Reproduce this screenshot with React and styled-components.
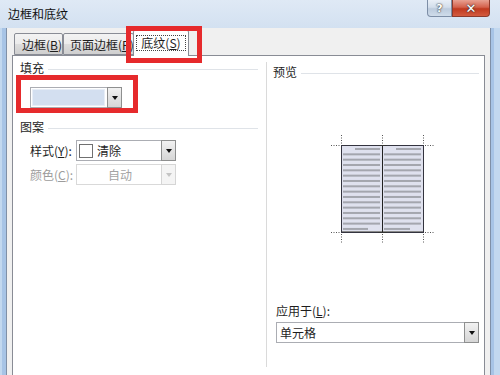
import React from "react";
import styled, { createGlobalStyle } from "styled-components";

const GlobalStyle = createGlobalStyle`
  html, body { margin: 0; padding: 0; }
  body {
    font-family: "Noto Sans CJK SC", "Noto Sans", "Liberation Sans", sans-serif;
    font-size: 12px;
    color: #1e1e1e;
  }
`;

const Root = styled.div`
  position: relative;
  width: 500px;
  height: 375px;
  overflow: hidden;
  background: #c6d9ef;
  display: flex;
  flex-direction: column;
`;

const TitleBar = styled.div`
  height: 28px;
  flex: none;
  display: flex;
  align-items: flex-start;
  background: linear-gradient(#dfe9f5, #d3e1f1);
  padding-right: 10px;
`;

const Title = styled.div`
  padding-left: 8px;
  line-height: 28px;
  font-size: 12px;
  color: #111;
`;

const Caption = styled.div`
  margin-left: auto;
  display: flex;
`;

const CapBtn = styled.div`
  width: ${(p) => p.w}px;
  height: 17px;
  box-sizing: border-box;
  border: 1px solid ${(p) => (p.red ? "#8c3a2c" : "#7d8ea6")};
  border-top: none;
  border-radius: ${(p) => (p.red ? "0 0 4px 0" : "0 0 0 4px")};
  background: ${(p) =>
    p.red
      ? "linear-gradient(#e8a192, #d4614c 45%, #c0391f 55%, #d35b3f)"
      : "linear-gradient(#e9eff7, #d3deeb 45%, #bccbdd 55%, #cfdcea)"};
  display: flex;
  align-items: center;
  justify-content: center;
  color: #fff;
  font-family: "DejaVu Sans", sans-serif;
  font-weight: bold;
  font-size: ${(p) => (p.red ? 13 : 11)}px;
  text-shadow: 0 0 2px #333, 0 0 1px #333;
`;

const Body = styled.div`
  flex: 1;
  display: flex;
  min-height: 0;
`;

const FrameLeft = styled.div`
  width: 7px;
  flex: none;
  background: linear-gradient(to right, #c2d8ef 0 2px, #a7c4e6 2px 6px, #7f90a7 6px 7px);
`;

const FrameRight = styled.div`
  width: 10px;
  flex: none;
  background: linear-gradient(to right, #7f90a7 0 1px, #a7c4e6 1px 4px, #c2d8ef 4px);
`;

const Content = styled.div`
  flex: 1;
  background: #f0f0f0;
  padding: 5px 5px 0 5px;
  display: flex;
  flex-direction: column;
  min-width: 0;
`;

const TabStrip = styled.div`
  display: flex;
  align-items: flex-end;
  height: 22px;
  padding-left: 2px;
  position: relative;
  z-index: 1;
`;

const Tab = styled.div`
  width: ${(p) => p.w}px;
  height: ${(p) => (p.active ? 26 : 22)}px;
  margin-left: ${(p) => p.ml || 0}px;
  margin-bottom: ${(p) => (p.active ? -1 : 0)}px;
  box-sizing: border-box;
  border: 1px solid #898c95;
  border-bottom: ${(p) => (p.active ? "none" : "1px solid #898c95")};
  border-radius: 2px 2px 0 0;
  background: ${(p) =>
    p.active ? "#fff" : "linear-gradient(#f3f3f3, #ebebeb 50%, #dddddd 51%, #cfcfcf)"};
  display: flex;
  align-items: center;
  justify-content: ${(p) => (p.active ? "center" : "flex-start")};
  padding-left: ${(p) => (p.active ? 0 : p.pl)}px;
  white-space: nowrap;
  position: relative;
  z-index: ${(p) => (p.active ? 2 : 1)};
`;

const Focus = styled.span`
  border: 1px dotted #444;
  padding: 0 4px;
  line-height: 14px;
  margin-top: -2px;
`;

const U = styled.span`
  text-decoration: underline;
  text-underline-offset: 1px;
`;

const Panel = styled.div`
  flex: 1;
  background: #fff;
  border: 1px solid #898c95;
  border-bottom: none;
  display: flex;
  padding-top: 4px;
`;

const LeftSection = styled.div`
  width: 245px;
  padding-left: 7px;
  display: flex;
  flex-direction: column;
  flex: none;
`;

const Head = styled.div`
  height: 16px;
  display: flex;
  align-items: center;
  gap: 4px;
  margin-top: ${(p) => p.mt || 0}px;
  margin-right: ${(p) => p.mr || 0}px;
  line-height: 16px;
  &::after {
    content: "";
    flex: 1;
    height: 1px;
    background: #dfe3e8;
    margin-top: 2px;
  }
`;

const Combo = styled.div`
  width: ${(p) => p.w}px;
  height: 21px;
  box-sizing: border-box;
  border: 1px solid ${(p) => (p.disabled ? "#d9d9d9" : "#abadb3")};
  background: #fff;
  display: flex;
  align-items: stretch;
  margin-top: ${(p) => p.mt || 0}px;
  margin-left: ${(p) => p.ml || 0}px;
  flex: none;
`;

const ComboText = styled.div`
  flex: 1;
  display: flex;
  align-items: center;
  gap: 4px;
  padding-left: ${(p) => p.pl ?? 2}px;
  justify-content: ${(p) => (p.center ? "center" : "flex-start")};
  color: ${(p) => (p.disabled ? "#a3a3a3" : "#1e1e1e")};
`;

const Swatch = styled.div`
  flex: 1;
  margin: 1px 2px 1px 1px;
  background: #d3dff0;
  border: 1px solid #e8eef7;
`;

const Square = styled.div`
  width: 14px;
  height: 14px;
  box-sizing: border-box;
  border: 1px solid #707070;
  background: #fff;
`;

const DropBtn = styled.div`
  width: 15px;
  flex: none;
  box-sizing: border-box;
  border: 1px solid ${(p) => (p.disabled ? "#d5d5d5" : "#8e8f8f")};
  margin: -1px -1px -1px 0;
  background: ${(p) => (p.disabled ? "#f4f4f4" : "linear-gradient(#f2f2f2, #e3e3e3 50%, #d6d6d6)")};
  display: flex;
  align-items: center;
  justify-content: center;
  &::after {
    content: "";
    border-left: 3.5px solid transparent;
    border-right: 3.5px solid transparent;
    border-top: 4px solid ${(p) => (p.disabled ? "#c4c4c4" : "#111")};
    margin-top: 1px;
  }
`;

const Row = styled.div`
  display: flex;
  align-items: center;
  margin-top: ${(p) => p.mt}px;
  padding-left: 10px;
`;

const Label = styled.div`
  width: 46px;
  flex: none;
  color: ${(p) => (p.disabled ? "#9c9c9c" : "#1e1e1e")};
`;

const RightSection = styled.div`
  flex: none;
  width: 212px;
  margin-left: 1px;
  height: 305px;
  margin-top: 2px;
  border-left: 1px solid #dadada;
  padding-left: 6px;
  display: flex;
  flex-direction: column;
`;

const PreviewWrap = styled.div`
  margin-top: 55px;
  padding-left: 58px;
  height: 108px;
`;

const ApplyLabel = styled.div`
  margin-top: 60px;
  padding-left: 3px;
  line-height: 16px;
`;

const Annot = styled.div`
  position: absolute;
  left: ${(p) => p.x}px;
  top: ${(p) => p.y}px;
  width: ${(p) => p.w}px;
  height: ${(p) => p.h}px;
  box-sizing: border-box;
  border: 5px solid #e62a2c;
  pointer-events: none;
  z-index: 5;
`;

function Preview() {
  const lines = [];
  for (let i = 0; i < 16; i++) {
    const y = 13 + i * 5.33;
    let l1 = [12, 49];
    let l2 = [53, 90];
    if (i === 0) {
      l1 = [24, 49];
      l2 = [65, 90];
    }
    if (i === 15) {
      l1 = [12, 37];
      l2 = [53, 79];
    }
    lines.push(<rect key={"a" + i} x={l1[0]} y={y} width={l1[1] - l1[0]} height="2" fill="#a4a6ae" />);
    lines.push(<rect key={"b" + i} x={l2[0]} y={y} width={l2[1] - l2[0]} height="2" fill="#a4a6ae" />);
  }
  const d = { stroke: "#555", strokeWidth: 1, strokeDasharray: "1 1.5" };
  return (
    <svg width="104" height="108" viewBox="0 0 104 108">
      <rect x="10.5" y="10.5" width="82" height="87" fill="#dfe1ee" />
      {lines}
      <rect x="10" y="96" width="83" height="2" fill="#8a8a8a" />
      <rect x="10.5" y="10.5" width="82" height="87" fill="none" stroke="#34343f" />
      <line x1="51.5" y1="10" x2="51.5" y2="98" stroke="#222" />
      <line x1="0" y1="10.5" x2="9" y2="10.5" {...d} />
      <line x1="94" y1="10.5" x2="103" y2="10.5" {...d} />
      <line x1="10.5" y1="0" x2="10.5" y2="9" {...d} />
      <line x1="51.5" y1="0" x2="51.5" y2="9" {...d} />
      <line x1="92.5" y1="0" x2="92.5" y2="9" {...d} />
      <line x1="0" y1="97.5" x2="9" y2="97.5" {...d} />
      <line x1="94" y1="97.5" x2="103" y2="97.5" {...d} />
      <line x1="10.5" y1="99" x2="10.5" y2="108" {...d} />
      <line x1="51.5" y1="99" x2="51.5" y2="108" {...d} />
      <line x1="92.5" y1="99" x2="92.5" y2="108" {...d} />
      <line x1="47" y1="10.5" x2="56" y2="10.5" stroke="#333" />
      <line x1="47" y1="97.5" x2="56" y2="97.5" stroke="#333" />
    </svg>
  );
}

export default function App() {
  return (
    <>
      <GlobalStyle />
      <Root>
        <TitleBar>
          <Title>边框和底纹</Title>
          <Caption>
            <CapBtn w={25}>?</CapBtn>
            <CapBtn w={38} red>
              ✕
            </CapBtn>
          </Caption>
        </TitleBar>
        <Body>
          <FrameLeft />
          <Content>
            <TabStrip>
              <Tab w={49} pl={7}>
                边框(<U>B</U>)
              </Tab>
              <Tab w={71} pl={6}>
                页面边框(<U>P</U>)
              </Tab>
              <Tab w={56} ml={-1} active>
                <Focus>
                  底纹(<U>S</U>)
                </Focus>
              </Tab>
            </TabStrip>
            <Panel>
              <LeftSection>
                <Head mr={7}>填充</Head>
                <Combo w={92} mt={11} ml={10}>
                  <Swatch />
                  <DropBtn />
                </Combo>
                <Head mt={11} mr={7}>
                  图案
                </Head>
                <Row mt={5}>
                  <Label>
                    样式(<U>Y</U>):
                  </Label>
                  <Combo w={100}>
                    <ComboText pl={2}>
                      <Square />
                      清除
                    </ComboText>
                    <DropBtn />
                  </Combo>
                </Row>
                <Row mt={3}>
                  <Label disabled>
                    颜色(<U>C</U>):
                  </Label>
                  <Combo w={100} disabled>
                    <ComboText center disabled>
                      自动
                    </ComboText>
                    <DropBtn disabled />
                  </Combo>
                </Row>
              </LeftSection>
              <RightSection>
                <Head mt={2} mr={6}>
                  预览
                </Head>
                <PreviewWrap>
                  <Preview />
                </PreviewWrap>
                <ApplyLabel>
                  应用于(<U>L</U>):
                </ApplyLabel>
                <Combo w={203} mt={3} ml={3}>
                  <ComboText pl={3}>单元格</ComboText>
                  <DropBtn />
                </Combo>
              </RightSection>
            </Panel>
          </Content>
          <FrameRight />
        </Body>
        <Annot x={126} y={26} w={76} h={37} />
        <Annot x={16} y={75} w={122} h={38} />
      </Root>
    </>
  );
}
